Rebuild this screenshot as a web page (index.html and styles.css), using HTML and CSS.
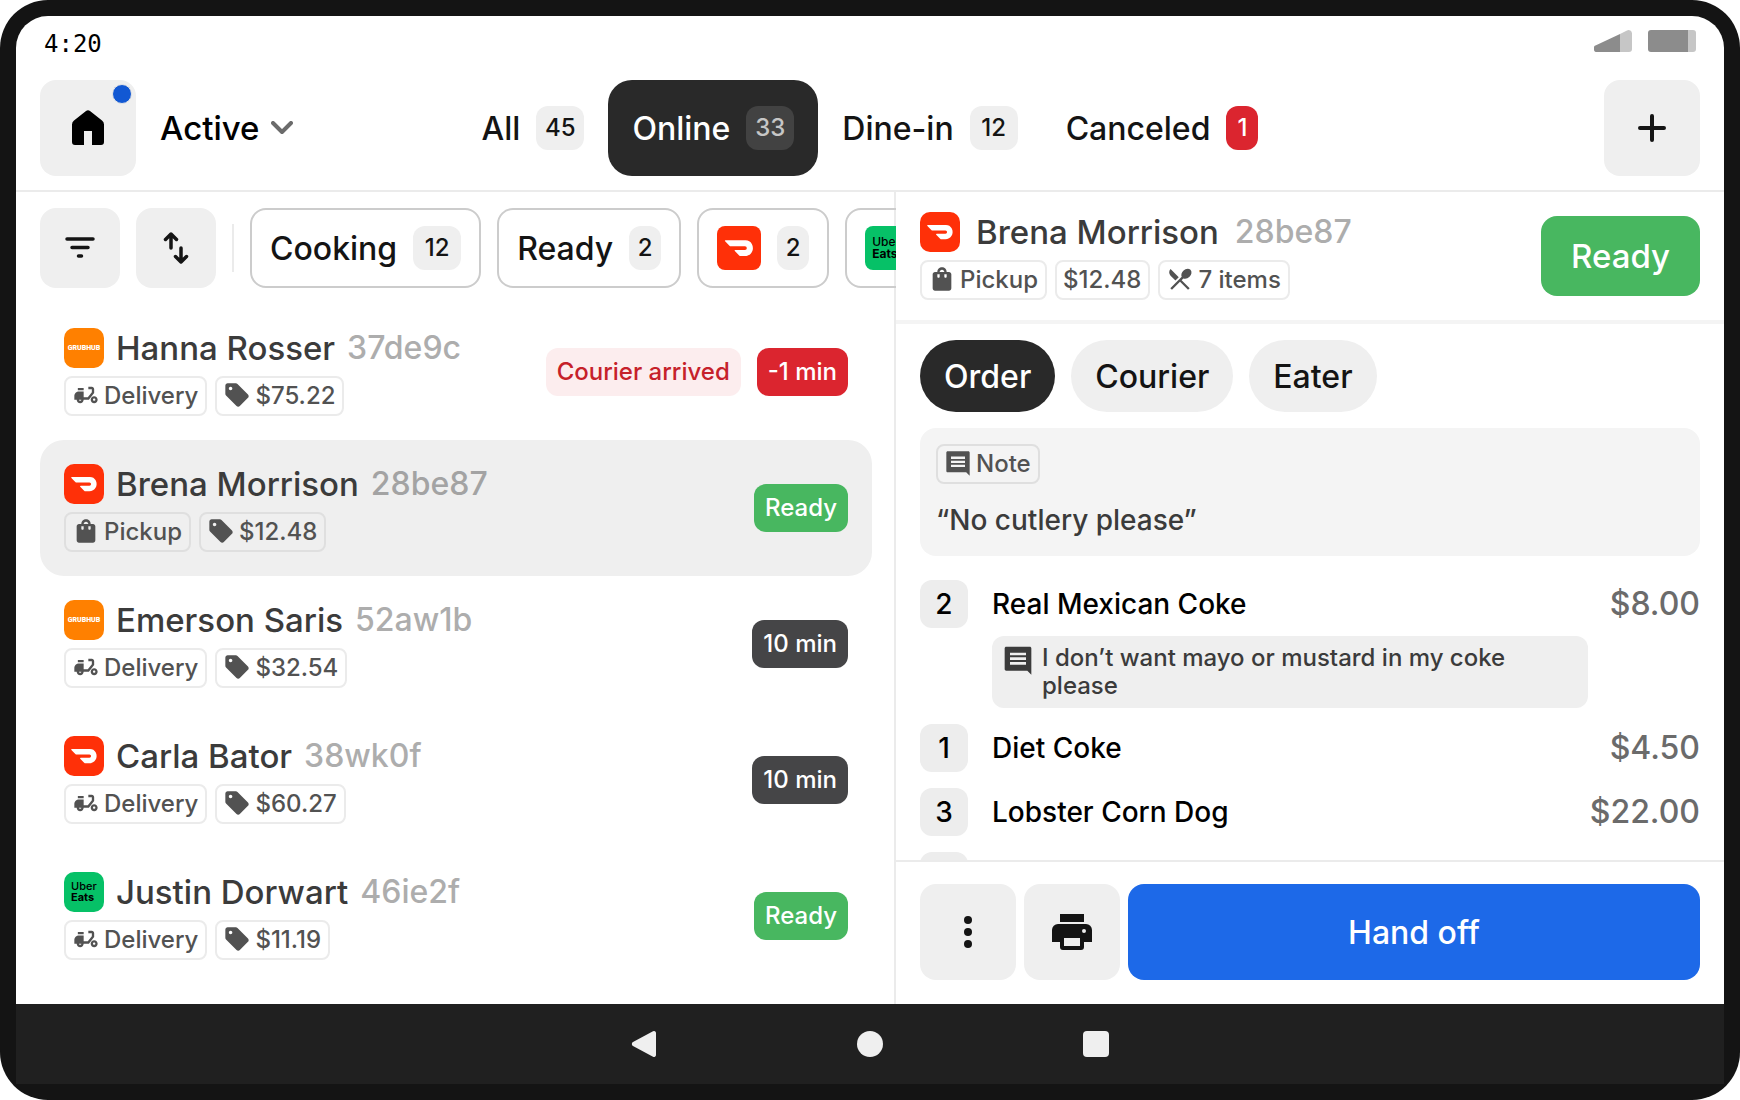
FILE: index.html
```html
<!DOCTYPE html>
<html lang="en">
<head>
  <meta charset="UTF-8" />
  <meta name="viewport" content="width=device-width, initial-scale=1.0"/>
  <title>Orders - Active</title>
  <link rel="stylesheet" href="styles.css">
</head>
<body>
  <!-- shared icons -->
  <svg class="hidden" aria-hidden="true">
    <symbol id="i-moped" viewBox="0 0 24 24"><path d="M19 7c0-1.1-.9-2-2-2h-3v2h3v2.65L13.52 14H10V9H6c-2.21 0-4 1.79-4 4v3h2c0 1.66 1.34 3 3 3s3-1.34 3-3h4.48L19 10.35V7zM7 17c-.55 0-1-.45-1-1h2c0 .55-.45 1-1 1zM5 6h5v2H5zM19 13c-1.66 0-3 1.34-3 3s1.34 3 3 3 3-1.34 3-3-1.34-3-3-3zm0 4c-.55 0-1-.45-1-1s.45-1 1-1 1 .45 1 1-.45 1-1 1z"/></symbol>
    <symbol id="i-tag" viewBox="0 0 24 24"><path d="M21.41 11.58l-9-9C12.05 2.22 11.55 2 11 2H4c-1.1 0-2 .9-2 2v7c0 .55.22 1.06.59 1.42l9 9c.36.36.86.58 1.41.58.55 0 1.05-.22 1.41-.59l7-7c.37-.36.59-.86.59-1.41 0-.55-.23-1.06-.59-1.42zM6.5 8C5.67 8 5 7.33 5 6.5S5.67 5 6.5 5 8 5.67 8 6.5 7.33 8 6.5 8z"/></symbol>
    <symbol id="i-bag" viewBox="0 0 24 24"><path d="M18 6h-2c0-2.21-1.79-4-4-4S8 3.79 8 6H6c-1.1 0-2 .9-2 2v12c0 1.1.9 2 2 2h12c1.1 0 2-.9 2-2V8c0-1.1-.9-2-2-2zm-8 4c0 .55-.45 1-1 1s-1-.45-1-1V8h2v2zm2-6c1.1 0 2 .9 2 2h-4c0-1.1.9-2 2-2zm4 6c0 .55-.45 1-1 1s-1-.45-1-1V8h2v2z"/></symbol>
    <symbol id="i-note" viewBox="0 0 24 24"><path d="M22 3.2c0-.7-.5-1.2-1.2-1.2H3.2C2.5 2 2 2.5 2 3.2v15.6c0 .7.5 1.2 1.2 1.2H19l3 3zM18 15.5H6v-2h12zm0-3.5H6v-2h12zm0-3.5H6v-2h12z"/></symbol>
    <symbol id="i-food" viewBox="0 0 24 24"><path d="M8.1 13.34l2.83-2.83L3.91 3.5c-1.56 1.56-1.56 4.09 0 5.66l4.19 4.18zm6.78-1.81c1.53.71 3.68.21 5.27-1.38 1.91-1.91 2.28-4.65.81-6.12-1.46-1.46-4.2-1.1-6.12.81-1.59 1.59-2.09 3.74-1.38 5.27L3.7 19.87l1.41 1.41L12 14.41l6.88 6.88 1.41-1.41L13.41 13l1.47-1.47z"/></symbol>
    <symbol id="i-doordash" viewBox="0 0 40 40"><path transform="translate(7.2 7.4) scale(1.06)" d="M23.071 8.409a6.09 6.09 0 00-5.396-3.228H.584A.589.589 0 00.17 6.184L3.894 9.93a1.752 1.752 0 001.242.516h12.049a1.554 1.554 0 11.031 3.108H8.91a.589.589 0 00-.415 1.003l3.725 3.747a1.75 1.75 0 001.242.516h3.757c4.887 0 8.584-5.225 5.852-10.413"/></symbol>
  </svg>

  <div class="device">
    <div class="screen">
      <div class="status-bar">
        <span class="time">4:20</span>
        <div class="status-icons">
          <svg width="38" height="22" viewBox="0 0 38 22"><path fill="#8c8c8c" d="M26 4v18H4a3.5 3.5 0 0 1-2-6.7z"/><path fill="#c6c6c6" d="M26 4L33 .4A3.5 3.5 0 0 1 38 3.500V19a3 3 0 0 1-3 3h-9z"/></svg>
          <svg width="48" height="22" viewBox="0 0 48 22"><path fill="#8c8c8c" d="M3 0h37v22H3a3 3 0 0 1-3-3V3a3 3 0 0 1 3-3z"/><path fill="#c6c6c6" d="M40 0h5a3 3 0 0 1 3 3v16a3 3 0 0 1-3 3h-5z"/></svg>
        </div>
      </div>

      <header>
        <div class="header-left">
          <button class="icon-btn home" aria-label="Home">
            <svg width="32" height="36" viewBox="0 0 32 36"><path d="M2 10.5L14 1a3.2 3.2 0 0 1 4 0l12 9.5a5 5 0 0 1 2 4V32a3 3 0 0 1-3 3h-9V21h-8v14H3a3 3 0 0 1-3-3V14.5a5 5 0 0 1 2-4z"/></svg>
            <span class="dot"></span>
          </button>
          <button class="view-select">
            Active
            <svg width="22" height="14" viewBox="0 0 22 14"><path d="M2 2l9 9 9-9" fill="none" stroke="#6b6b6b" stroke-width="4" stroke-linecap="round" stroke-linejoin="round"/></svg>
          </button>
        </div>
        <nav class="tabs">
          <button class="tab">All <span class="count wide">45</span></button>
          <button class="tab active">Online <span class="count wide">33</span></button>
          <button class="tab">Dine-in <span class="count wide">12</span></button>
          <button class="tab">Canceled <span class="count alert">1</span></button>
        </nav>
        <button class="icon-btn add" aria-label="New order">
          <svg width="28" height="28" viewBox="0 0 28 28"><path d="M14 2v24M2 14h24" stroke="#141414" stroke-width="4" stroke-linecap="round"/></svg>
        </button>
      </header>

      <main>
        <section class="orders">
          <div class="filters">
            <button class="tool-btn" aria-label="Filter">
              <svg width="30" height="22" viewBox="0 0 30 22"><path d="M2 2h26M7 10.5h16M13.5 19h3" stroke="#141414" stroke-width="3.5" stroke-linecap="round"/></svg>
            </button>
            <button class="tool-btn" aria-label="Sort">
              <svg width="28" height="34" viewBox="0 0 28 34"><path d="M9 17V3M3.5 8.5L9 3l5.5 5.5M19 17v14M13.5 25.5L19 31l5.5-5.5" fill="none" stroke="#141414" stroke-width="3.5" stroke-linecap="round" stroke-linejoin="round"/></svg>
            </button>
            <span class="divider"></span>
            <button class="filter">Cooking <span class="count wide">12</span></button>
            <button class="filter">Ready <span class="count">2</span></button>
            <button class="filter" aria-label="DoorDash"><span class="logo doordash"><svg><use href="#i-doordash"/></svg></span> <span class="count">2</span></button>
            <button class="filter"><span class="logo ubereats">Uber<b>Eats</b></span></button>
          </div>

          <ul class="order-list">
            <li class="order">
              <div class="order-info">
                <div class="order-title"><span class="logo grubhub">GRUBHUB</span><h2>Hanna Rosser</h2><span class="order-id">37de9c</span></div>
                <div class="chips">
                  <span class="chip"><svg><use href="#i-moped"/></svg>Delivery</span>
                  <span class="chip"><svg><use href="#i-tag"/></svg>$75.22</span>
                </div>
              </div>
              <span class="status arrived">Courier arrived</span>
              <span class="status late">-1 min</span>
            </li>
            <li class="order selected">
              <div class="order-info">
                <div class="order-title"><span class="logo doordash"><svg><use href="#i-doordash"/></svg></span><h2>Brena Morrison</h2><span class="order-id">28be87</span></div>
                <div class="chips">
                  <span class="chip"><svg><use href="#i-bag"/></svg>Pickup</span>
                  <span class="chip"><svg><use href="#i-tag"/></svg>$12.48</span>
                </div>
              </div>
              <span class="status ready">Ready</span>
            </li>
            <li class="order">
              <div class="order-info">
                <div class="order-title"><span class="logo grubhub">GRUBHUB</span><h2>Emerson Saris</h2><span class="order-id">52aw1b</span></div>
                <div class="chips">
                  <span class="chip"><svg><use href="#i-moped"/></svg>Delivery</span>
                  <span class="chip"><svg><use href="#i-tag"/></svg>$32.54</span>
                </div>
              </div>
              <span class="status">10 min</span>
            </li>
            <li class="order">
              <div class="order-info">
                <div class="order-title"><span class="logo doordash"><svg><use href="#i-doordash"/></svg></span><h2>Carla Bator</h2><span class="order-id">38wk0f</span></div>
                <div class="chips">
                  <span class="chip"><svg><use href="#i-moped"/></svg>Delivery</span>
                  <span class="chip"><svg><use href="#i-tag"/></svg>$60.27</span>
                </div>
              </div>
              <span class="status">10 min</span>
            </li>
            <li class="order">
              <div class="order-info">
                <div class="order-title"><span class="logo ubereats">Uber<b>Eats</b></span><h2>Justin Dorwart</h2><span class="order-id">46ie2f</span></div>
                <div class="chips">
                  <span class="chip"><svg><use href="#i-moped"/></svg>Delivery</span>
                  <span class="chip"><svg><use href="#i-tag"/></svg>$11.19</span>
                </div>
              </div>
              <span class="status ready">Ready</span>
            </li>
          </ul>
        </section>

        <section class="detail">
          <div class="detail-header">
            <div class="order-info">
              <div class="order-title"><span class="logo doordash"><svg><use href="#i-doordash"/></svg></span><h1>Brena Morrison</h1><span class="order-id">28be87</span></div>
              <div class="chips">
                <span class="chip"><svg><use href="#i-bag"/></svg>Pickup</span>
                <span class="chip">$12.48</span>
                <span class="chip"><svg><use href="#i-food"/></svg>7 items</span>
              </div>
            </div>
            <button class="ready-btn">Ready</button>
          </div>

          <div class="detail-body">
            <div class="pills">
              <button class="pill active">Order</button>
              <button class="pill">Courier</button>
              <button class="pill">Eater</button>
            </div>

            <div class="note">
              <span class="chip"><svg><use href="#i-note"/></svg>Note</span>
              <p>“No cutlery please”</p>
            </div>

            <ul class="items">
              <li class="item">
                <span class="qty">2</span><span class="item-name">Real Mexican Coke</span><span class="price">$8.00</span>
                <div class="item-note"><svg><use href="#i-note"/></svg><p>I don’t want mayo or mustard in my coke please</p></div>
              </li>
              <li class="item"><span class="qty">1</span><span class="item-name">Diet Coke</span><span class="price">$4.50</span></li>
              <li class="item"><span class="qty">3</span><span class="item-name">Lobster Corn Dog</span><span class="price">$22.00</span></li>
              <li class="item"><span class="qty"></span></li>
            </ul>
          </div>

          <footer>
            <button class="icon-btn" aria-label="More">
              <svg width="8" height="32" viewBox="0 0 8 32" fill="#141414"><circle cx="4" cy="4" r="4"/><circle cx="4" cy="16" r="4"/><circle cx="4" cy="28" r="4"/></svg>
            </button>
            <button class="icon-btn" aria-label="Print">
              <svg width="48" height="48" viewBox="0 0 24 24" fill="#141414"><path d="M6 3h12v4H6zM5 8h14a3 3 0 0 1 3 3v6h-4v2.5a1.5 1.5 0 0 1-1.5 1.5h-9A1.5 1.5 0 0 1 6 19.5V17H2v-6a3 3 0 0 1 3-3zm3 7v4h8v-4zm10-4.5a1 1 0 1 0 0 2 1 1 0 0 0 0-2z" fill-rule="evenodd"/></svg>
            </button>
            <button class="handoff-btn">Hand off</button>
          </footer>
        </section>
      </main>

      <div class="system-nav">
        <button aria-label="Back"><svg width="26" height="28" viewBox="0 0 26 28"><path d="M2 12L22 1.3A2 2 0 0 1 25 3v22a2 2 0 0 1-3 1.7L2 16a2.3 2.3 0 0 1 0-4z"/></svg></button>
        <button aria-label="Home screen"><svg width="26" height="26" viewBox="0 0 26 26"><circle cx="13" cy="13" r="13"/></svg></button>
        <button aria-label="Recent apps"><svg width="26" height="26" viewBox="0 0 26 26"><rect width="26" height="26" rx="4"/></svg></button>
      </div>
    </div>
  </div>
</body>
</html>
```
FILE: styles.css
```css
* {
  box-sizing: border-box;
}

body {
  font-family: Inter, sans-serif;
  font-weight: 450;
  margin: 0;
  background-color: #fff;
  color: #141414;
}

button {
  font: inherit;
  color: inherit;
  border: none;
  background: none;
  padding: 0;
  cursor: pointer;
}

h1, h2, p, ul {
  margin: 0;
  padding: 0;
}

ul {
  list-style: none;
}

.hidden {
  display: none;
}

/* tablet frame */
.device {
  height: 100vh;
  padding: 16px;
  background-color: #141414;
  border-radius: 48px;
  overflow: hidden;
}

.screen {
  height: 100%;
  display: flex;
  flex-direction: column;
  background-color: #fff;
  border-radius: 32px 32px 0 0;
}

.status-bar {
  display: flex;
  justify-content: space-between;
  align-items: flex-start;
  padding: 14px 28px 12px;
}

.time {
  font-family: "DejaVu Sans Mono", monospace;
  font-size: 24px;
  font-weight: 400;
  line-height: 28px;
  color: #000;
}

.status-icons {
  display: flex;
  gap: 16px;
}

/* header */
header {
  display: grid;
  grid-template-columns: 1fr auto 1fr;
  align-items: center;
  padding: 10px 24px 14px;
  border-bottom: 2px solid #ebebeb;
}

.header-left {
  display: flex;
  align-items: center;
  gap: 24px;
}

.icon-btn {
  display: flex;
  align-items: center;
  justify-content: center;
  flex: none;
  width: 96px;
  height: 96px;
  border-radius: 16px;
  background-color: #efefef;
}

.home {
  position: relative;
}

.dot {
  position: absolute;
  top: 4px;
  right: 4px;
  width: 20px;
  height: 20px;
  border: 1px solid #e6e6e6;
  border-radius: 50%;
  background-color: #1258d3;
}

.add {
  justify-self: end;
}

.view-select {
  display: flex;
  align-items: center;
  gap: 12px;
  font-size: 33px;
  font-weight: 500;
  color: #000;
}

.tabs {
  display: flex;
}

.tab {
  display: flex;
  align-items: center;
  gap: 16px;
  height: 96px;
  padding: 0 24px;
  border-radius: 24px;
  font-size: 32px;
}

.tab.active {
  background-color: #292929;
  color: #fff;
}

.count {
  width: 32px;
  height: 44px;
  border-radius: 12px;
  background-color: #efefef;
  font-size: 24px;
  line-height: 44px;
  text-align: center;
}

.count.wide {
  width: 48px;
}

.active .count {
  background-color: #424242;
  color: #c6c6c6;
}

.count.alert {
  background-color: #db252f;
  color: #fff;
}

main {
  flex: 1;
  min-height: 0;
  display: grid;
  grid-template-columns: minmax(0, 880fr) minmax(0, 828fr);
}

/* order list */
.orders {
  box-shadow: inset -2px 0 #ebebeb;
  overflow: hidden;
}

.filters {
  display: flex;
  align-items: center;
  gap: 16px;
  padding: 16px 0 16px 24px;
  overflow: hidden;
}

.tool-btn {
  display: flex;
  align-items: center;
  justify-content: center;
  flex: none;
  width: 80px;
  height: 80px;
  border-radius: 16px;
  background-color: #efefef;
}

.divider {
  flex: none;
  width: 2px;
  height: 48px;
  background-color: #ebebeb;
}

.filter {
  display: flex;
  align-items: center;
  flex: none;
  gap: 16px;
  height: 80px;
  padding: 0 18px;
  border: 2px solid #ccc;
  border-radius: 16px;
  font-size: 32px;
}

.order-list {
  padding: 0 24px;
}

.order {
  display: flex;
  align-items: center;
  gap: 16px;
  padding: 24px;
  border-radius: 24px;
}

.order.selected {
  background-color: #efefef;
}

.order-info {
  flex: 1;
}

.order-title {
  display: flex;
  align-items: center;
  gap: 12px;
  height: 40px;
  margin-bottom: 8px;
  color: #3b3b3b;
}

.order-title h1,
.order-title h2 {
  font-size: 33px;
  font-weight: 450;
  line-height: 40px;
}

.order-id {
  font-size: 32px;
  line-height: 40px;
  color: #adadad;
}

.selected .order-id {
  color: #a3a3a3;
}

.logo {
  display: flex;
  flex-direction: column;
  align-items: center;
  justify-content: center;
  flex: none;
  width: 40px;
  height: 40px;
  border-radius: 10px;
}

.filter .logo {
  width: 44px;
  height: 44px;
  border-radius: 8px;
}

.doordash {
  background-color: #ff3008;
}

.doordash svg {
  width: 100%;
  height: 100%;
  fill: #fff;
}

.grubhub {
  background-color: #ff8000;
  color: #fff;
  font-family: Roboto, sans-serif;
  font-size: 7px;
  font-weight: 900;
}

.ubereats {
  align-items: flex-start;
  padding-left: 7px;
  background-color: #06c167;
  color: #000;
  font-size: 11px;
  line-height: 11px;
}

.filter .ubereats {
  font-size: 12px;
  line-height: 12px;
}

.chips {
  display: flex;
  gap: 8px;
}

.chip {
  display: inline-flex;
  align-items: center;
  gap: 4px;
  height: 40px;
  padding: 0 7px 2px 6px;
  border: 2px solid #ebebeb;
  border-radius: 8px;
  font-size: 24px;
  color: #525252;
}

.chip svg {
  width: 28px;
  height: 28px;
  fill: #525252;
}

.selected .chip,
.note .chip {
  border-color: #dfdfdf;
}

.status {
  height: 48px;
  padding: 0 11px;
  border-radius: 12px;
  background-color: #454547;
  color: #fff;
  font-size: 24px;
  line-height: 48px;
}

.status.ready {
  background-color: #48b760;
}

.status.late {
  background-color: #db252f;
}

.status.arrived {
  background-color: #fcedee;
  color: #c6212a;
}

/* order detail */
.detail {
  display: flex;
  flex-direction: column;
  min-height: 0;
}

.detail-header {
  display: flex;
  align-items: center;
  padding: 20px 24px;
  border-bottom: 4px solid #f4f4f4;
}

.detail-header .order-title {
  gap: 16px;
}

.ready-btn {
  height: 80px;
  padding: 0 30px;
  border-radius: 16px;
  background-color: #48b760;
  color: #fff;
  font-size: 33px;
}

.detail-body {
  flex: 1;
  min-height: 0;
  padding: 16px 24px 0;
  overflow: hidden;
}

.pills {
  display: flex;
  gap: 16px;
}

.pill {
  height: 72px;
  padding: 0 24px;
  border-radius: 36px;
  background-color: #efefef;
  font-size: 32px;
}

.pill.active {
  background-color: #292929;
  color: #fff;
}

.note {
  margin: 16px 0 24px;
  padding: 16px;
  border-radius: 16px;
  background-color: #f4f4f4;
}

.note p {
  margin-top: 16px;
  font-size: 28px;
  line-height: 40px;
  color: #3b3b3b;
}

.item {
  display: grid;
  grid-template-columns: 48px 1fr auto;
  column-gap: 24px;
  row-gap: 8px;
  margin-bottom: 16px;
  font-size: 28px;
  line-height: 48px;
  color: #000;
}

.qty {
  height: 48px;
  border-radius: 12px;
  background-color: #ededed;
  text-align: center;
}

.price {
  font-size: 32px;
  color: #6b6b6b;
}

.item-note {
  grid-column: 2 / 4;
  display: flex;
  gap: 8px;
  margin-right: 112px;
  padding: 8px 10px;
  border-radius: 12px;
  background-color: #efefef;
  font-size: 24px;
  line-height: 28px;
  color: #3b3b3b;
}

.item-note svg {
  flex: none;
  width: 32px;
  height: 32px;
  fill: #3b3b3b;
}

footer {
  display: flex;
  gap: 8px;
  padding: 22px 24px 24px;
  border-top: 2px solid #ebebeb;
}

.handoff-btn {
  flex: 1;
  border-radius: 16px;
  background-color: #1d69e8;
  color: #fff;
  font-size: 32px;
}

/* android navigation */
.system-nav {
  display: flex;
  align-items: center;
  justify-content: center;
  gap: 178px;
  height: 80px;
  flex: none;
  background-color: #202020;
}

.system-nav button {
  display: flex;
  align-items: center;
  justify-content: center;
  width: 48px;
  height: 48px;
}

.system-nav svg {
  fill: #efefef;
}
```
